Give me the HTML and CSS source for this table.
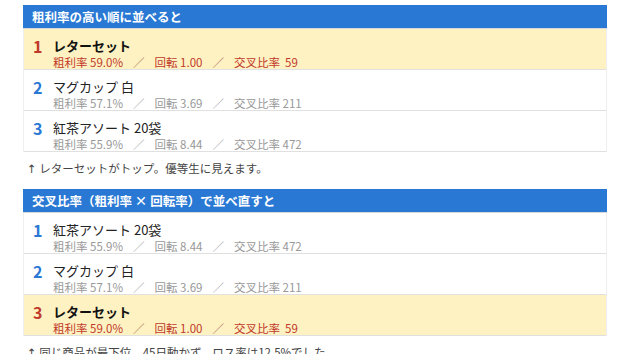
FILE: index.html
```html
<!DOCTYPE html>
<html lang="ja">
<head>
<meta charset="utf-8">
<link rel="stylesheet" href="styles.css">
</head>
<body>
<div class="page">
  <section class="panel">
    <div class="panel-head">粗利率の高い順に並べると</div>
    <div class="row hl">
      <div class="rank">1</div>
      <div class="body">
        <div class="name">レターセット</div>
        <div class="meta">粗利率 59.0%<span class="sep">／</span>回転 1.00<span class="sep">／</span>交叉比率&nbsp; 59</div>
      </div>
    </div>
    <div class="row">
      <div class="rank">2</div>
      <div class="body">
        <div class="name">マグカップ 白</div>
        <div class="meta">粗利率 57.1%<span class="sep">／</span>回転 3.69<span class="sep">／</span>交叉比率 211</div>
      </div>
    </div>
    <div class="row">
      <div class="rank">3</div>
      <div class="body">
        <div class="name">紅茶アソート 20袋</div>
        <div class="meta">粗利率 55.9%<span class="sep">／</span>回転 8.44<span class="sep">／</span>交叉比率 472</div>
      </div>
    </div>
  </section>
  <p class="note"><span class="arrow">↑</span> レターセットがトップ。優等生に見えます。</p>

  <section class="panel">
    <div class="panel-head">交叉比率（粗利率 × 回転率）で並べ直すと</div>
    <div class="row">
      <div class="rank">1</div>
      <div class="body">
        <div class="name">紅茶アソート 20袋</div>
        <div class="meta">粗利率 55.9%<span class="sep">／</span>回転 8.44<span class="sep">／</span>交叉比率 472</div>
      </div>
    </div>
    <div class="row">
      <div class="rank">2</div>
      <div class="body">
        <div class="name">マグカップ 白</div>
        <div class="meta">粗利率 57.1%<span class="sep">／</span>回転 3.69<span class="sep">／</span>交叉比率 211</div>
      </div>
    </div>
    <div class="row hl">
      <div class="rank">3</div>
      <div class="body">
        <div class="name">レターセット</div>
        <div class="meta">粗利率 59.0%<span class="sep">／</span>回転 1.00<span class="sep">／</span>交叉比率&nbsp; 59</div>
      </div>
    </div>
  </section>
  <p class="note"><span class="arrow">↑</span> 同じ商品が最下位。45日動かず、ロス率は12.5%でした。</p>
</div>
</body>
</html>
```
FILE: styles.css
```css
html, body {
  margin: 0;
  padding: 0;
  background: #fff;
}
body {
  font-family: "Noto Sans CJK JP", "Noto Sans", sans-serif;
  color: #222;
}
.page {
  padding: 5px 24px 0 23px;
}
.panel {
  border-left: 1px solid #eee;
  border-right: 1px solid #eee;
}
.panel-head {
  background: #2979d4;
  color: #fff;
  font-weight: bold;
  font-size: 12.5px;
  line-height: 23px;
  height: 23px;
  padding-left: 9px;
  margin: 0 -1px;
  border-bottom: 1px solid #d8d8d8;
}
.row {
  display: flex;
  align-items: flex-start;
  padding: 9px 0 0 9px;
  height: 31px;
  border-bottom: 1px solid #e0e0e0;
  background: #fff;
}
.row.hl {
  background: #fef2c2;
}
.rank {
  width: 20px;
  font-size: 16px;
  font-weight: bold;
  line-height: 16px;
  color: #2a78d4;
}
.row.hl .rank {
  color: #c0392b;
}
.name {
  font-size: 13px;
  line-height: 16px;
  color: #222;
}
.row.hl .name {
  font-weight: bold;
  color: #111;
}
.meta {
  font-size: 11.5px;
  line-height: 16px;
  color: #999;
  white-space: nowrap;
}
.row.hl .meta {
  color: #c0392b;
}
.sep {
  margin: 0 10px;
  color: #a9a9a9;
}
.row.hl .sep {
  color: #b07060;
}
.note {
  margin: 6px 0 10px 4px;
  font-size: 11.5px;
  line-height: 20px;
  color: #444;
}
.arrow {
  font-family: "DejaVu Sans", sans-serif;
  color: #444;
}
```
